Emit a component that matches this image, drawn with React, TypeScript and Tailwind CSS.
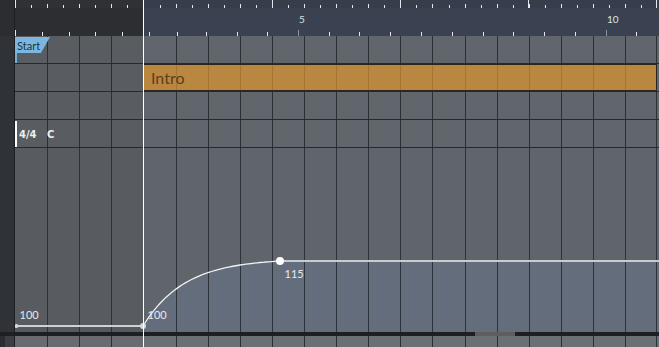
import clsx from 'clsx';

// x position of every grid line (page pixels)
const LINES = [47, 79, 111, 143, 176, 208, 240, 272, 304, 336, 368, 400, 432, 465, 497, 529, 561, 593, 625, 656];
const BARS = [15, 143, 272, 400, 528, 656];
const SECONDS = [42, 69, 95, 122, 149, 177, 206, 237, 267, 329, 359, 390, 421, 452, 483, 513, 544, 575, 636];

const K = 3.3;
const curvePts: string[] = [];
for (let i = 0; i <= 48; i++) {
  const t = i / 48;
  const x = 143 + 137 * t;
  const y = 326 - (65 * (1 - Math.exp(-K * t))) / (1 - Math.exp(-K));
  curvePts.push(`${x.toFixed(1)},${y.toFixed(1)}`);
}
const curve = 'M' + curvePts.join(' L');

function Cells({
  from = 0,
  to = LINES.length,
  bg = '',
  preBg = '',
  line = 'border-[#2b2e33]',
}: {
  from?: number;
  to?: number;
  bg?: string;
  preBg?: string;
  line?: string;
}) {
  return (
    <>
      {LINES.slice(from, to).map((x, j) => {
        const i = from + j;
        const prev = i === 0 ? 14 : LINES[i - 1];
        return (
          <div
            key={x}
            style={{ width: x - prev }}
            className={clsx('h-full shrink-0 border-r', line, i < 4 ? preBg : bg)}
          />
        );
      })}
    </>
  );
}

function GridRow({ children }: { children?: React.ReactNode }) {
  return (
    <div className="relative flex h-[28px] shrink-0 border-b border-[#26292d]">
      <Cells preBg="bg-[#595d62]" bg="bg-[#60666b]" />
      <div className="flex-1 bg-[#60666b]" />
      {children}
    </div>
  );
}

function Ruler() {
  const mids: number[] = [];
  let prev = 15;
  for (const x of LINES) {
    mids.push(Math.ceil((prev + x) / 2));
    prev = x;
  }
  return (
    <div className="relative flex h-[36px] shrink-0">
      <div className="flex w-[129px] flex-col">
        <div className="h-[8px] bg-[#2f3134]" />
        <div className="flex-1 bg-[#2c2e31]" />
      </div>
      <div className="flex flex-1 flex-col">
        <div className="h-[8px] bg-[#373e4b]" />
        <div className="flex-1 bg-[#3a4251]" />
      </div>
      <svg className="absolute inset-0" width={644} height={36} viewBox="15 0 644 36">
        {LINES.filter((x) => !BARS.includes(x)).map((x) => (
          <rect key={x} x={x} y={4} width={1} height={4} fill="#e4e7ec" />
        ))}
        {mids.map((x) => (
          <rect key={'m' + x} x={x} y={5} width={1} height={3} fill="#e4e7ec" />
        ))}
        {BARS.map((x) => (
          <rect key={'b' + x} x={x} y={0} width={1} height={8} fill="#e4e7ec" />
        ))}
        {SECONDS.map((x) => (
          <rect key={'s' + x} x={x} y={32} width={1} height={4} fill="#e4e7ec" />
        ))}
        <rect x={15} y={30} width={1} height={6} fill="#e4e7ec" />
        <rect x={298} y={30} width={1} height={6} fill="#8f959d" />
        <rect x={606} y={30} width={1} height={6} fill="#8f959d" />
        <text x={299} y={23.3} fontSize={10} fill="#dde2e8" fontFamily="Lato, sans-serif">
          5
        </text>
        <text x={607} y={23.3} fontSize={10} fill="#dde2e8" fontFamily="Lato, sans-serif">
          10
        </text>
      </svg>
    </div>
  );
}

function TempoTrack() {
  return (
    <div className="relative flex h-[184px] shrink-0">
      <svg className="absolute inset-0" width={644} height={184} viewBox="15 148 644 184">
        <rect x={15} y={148} width={128} height={184} fill="#585c61" />
        <rect x={143} y={148} width={516} height={184} fill="#5f656a" />
        <rect x={15} y={327} width={128} height={5} fill="#555a61" />
        <path d={curve + ' L659,261 L659,332 L143,332 Z'} fill="#636d7c" />
      </svg>
      <div className="relative flex h-full flex-1">
        <Cells line="border-[#2d3139]" />
      </div>
      <svg className="absolute inset-0" width={644} height={184} viewBox="15 148 644 184">
        <path d="M16 326 H143" stroke="#cfd2d5" strokeWidth={2} fill="none" />
        <path d="M280 261 H659" stroke="#c9cdd3" strokeWidth={2} fill="none" />
        <path d={curve} stroke="#f0f1f3" strokeWidth={1.3} fill="none" />
        <circle cx={16.5} cy={326} r={2} fill="#d6d8da" />
        <circle cx={143} cy={326} r={3} fill="#d6d8da" />
        <circle cx={280} cy={261} r={4} fill="#ffffff" />
        <g fontSize={11} fill="#e8e9eb" fontFamily="Lato, sans-serif">
          <text x={19.5} y={318.5}>100</text>
          <text x={147.5} y={318.5}>100</text>
          <text x={284.5} y={277.7}>115</text>
        </g>
      </svg>
    </div>
  );
}

export default function App() {
  return (
    <div className="relative flex h-[347px] w-[659px] overflow-hidden bg-[#2e3134] font-['Lato',sans-serif]">
      {/* left track header strip */}
      <div className="flex w-[15px] shrink-0 flex-col border-r border-[#1c1e21]">
        <div className="h-[36px] bg-[#2b2d30]" />
        <div className="flex-1 bg-[#2f3236]" />
        <div className="h-[4px] bg-[#1d1f22]" />
        <div className="flex h-[11px]">
          <div className="w-[5px] bg-[#2a2c2f]" />
          <div className="flex-1 bg-[#3b3e42]" />
        </div>
      </div>

      <div className="flex min-w-0 flex-1 flex-col">
        <Ruler />

        <GridRow>
          <div className="absolute left-0 top-px h-[26px] w-[2px] bg-[#74b0d8]" />
          <div className="absolute left-0 top-px h-[16px] w-[35px] bg-[#7cb7de] pl-[2px] text-[11px] leading-[17px] text-[#1c3246] [clip-path:polygon(0_0,100%_0,74%_100%,0_100%)]">
            Start
          </div>
        </GridRow>

        <div className="relative flex h-[28px] shrink-0 border-b border-[#26292d]">
          <Cells to={4} preBg="bg-[#595d62]" />
          <div className="relative flex h-full w-[513px] shrink-0 border-y border-r border-[#2a2520] bg-[#b9873f]">
            <Cells from={4} to={19} line="border-[#a47433]" />
            <div className="flex-1" />
            <span className="absolute left-[7px] top-[5px] text-[16px] leading-none text-[#5a3f1c]">Intro</span>
          </div>
          <div className="flex-1 bg-[#60666b]" />
        </div>

        <GridRow />

        <GridRow>
          <div className="absolute left-0 top-px h-[26px] w-[2px] bg-white" />
          <span className="absolute left-[4px] top-[10px] font-['DejaVu_Sans',sans-serif] text-[10px] font-bold leading-none text-[#eceef0]">
            4/4
          </span>
          <span className="absolute left-[32px] top-[10px] font-['DejaVu_Sans',sans-serif] text-[10px] font-bold leading-none text-[#eceef0]">
            C
          </span>
        </GridRow>

        <TempoTrack />

        {/* horizontal scrollbar */}
        <div className="h-[4px] shrink-0 bg-[#1d1f22] pl-[460px]">
          <div className="h-full w-[40px] bg-[#5e5e5e]" />
        </div>

        <div className="flex h-[11px] shrink-0">
          <Cells preBg="bg-[#686c71]" bg="bg-[#6b7075]" />
          <div className="flex-1 bg-[#6b7075]" />
        </div>
      </div>

      {/* playhead */}
      <div className="absolute left-[143px] top-0 h-full w-px bg-white" />
    </div>
  );
}
